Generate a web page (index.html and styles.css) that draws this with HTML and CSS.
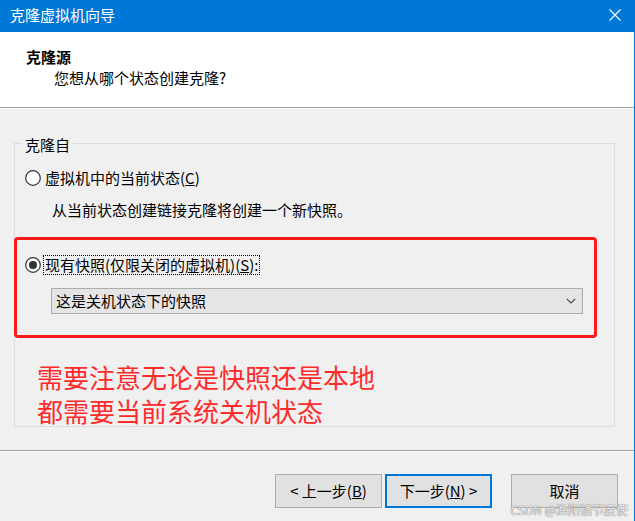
FILE: index.html
```html
<!DOCTYPE html>
<html lang="zh-CN">
<head>
<meta charset="utf-8">
<title>克隆虚拟机向导</title>
<link rel="stylesheet" href="styles.css">
</head>
<body>
<div class="window">
  <div class="titlebar">
    <span class="title">克隆虚拟机向导</span>
    <svg class="close" width="12" height="12" viewBox="0 0 12 12"><path d="M0.5 0.5 L11.5 11.5 M11.5 0.5 L0.5 11.5" stroke="#fff" stroke-width="1.1" fill="none"/></svg>
  </div>
  <div class="header">
    <div class="h-title">克隆源</div>
    <div class="h-sub">您想从哪个状态创建克隆?</div>
  </div>
  <div class="sep"></div>
  <div class="content">
    <fieldset class="group">
      <legend>克隆自</legend>
      <div class="opt opt1">
        <svg class="radio" width="16" height="16" viewBox="0 0 16 16"><circle cx="8" cy="8" r="7.3" fill="#fff" stroke="#333" stroke-width="1.2"/></svg>
        <span>虚拟机中的当前状态(<u>C</u>)</span>
      </div>
      <div class="desc">从当前状态创建链接克隆将创建一个新快照。</div>
      <div class="mark">
        <div class="opt opt2">
          <svg class="radio" width="16" height="16" viewBox="0 0 16 16"><circle cx="8" cy="8" r="7.3" fill="#fff" stroke="#333" stroke-width="1.2"/><circle cx="8" cy="8" r="4" fill="#333"/></svg>
          <span class="focus">现有快照(仅限关闭的虚拟机)(<u>S</u>):</span>
        </div>
        <div class="select">
          <span>这是关机状态下的快照</span>
          <svg width="10" height="6" viewBox="0 0 10 6"><polyline points="0.8,0.8 5,5 9.2,0.8" fill="none" stroke="#444" stroke-width="1.2"/></svg>
        </div>
      </div>
      <div class="note">需要注意无论是快照还是本地<br>都需要当前系统关机状态</div>
    </fieldset>
  </div>
  <div class="sep sep2"></div>
  <div class="footer">
    <button class="btn">&lt; 上一步(<u>B</u>)</button>
    <button class="btn btn-next">下一步(<u>N</u>) &gt;</button>
    <button class="btn btn-cancel">取消</button>
  </div>
  <div class="watermark">CSDN @渔阳镇节度使</div>
</div>
</body>
</html>
```

FILE: styles.css
```css
html, body {
  margin: 0;
  padding: 0;
}
body {
  background: #f0f0f0;
  font-family: "Noto Sans CJK SC", "Noto Sans", sans-serif;
  font-size: 15px;
  color: #000;
  width: 635px;
  height: 521px;
  overflow: hidden;
}
.window {
  position: relative;
  width: 635px;
  height: 521px;
  box-sizing: border-box;
  border-right: 1px solid #0078d7;
}
.titlebar {
  height: 32px;
  background: #0078d7;
  display: flex;
  align-items: center;
  padding: 0 13px 0 10px;
  box-sizing: border-box;
}
.title {
  color: #fff;
  font-size: 15px;
  line-height: 20px;
  margin-top: -2px;
}
.close {
  margin-left: auto;
  margin-top: -3px;
}
.header {
  height: 75px;
  background: #fff;
  padding: 15px 0 0 26px;
  box-sizing: border-box;
}
.h-title {
  font-weight: bold;
  line-height: 20px;
}
.h-sub {
  margin-top: 1px;
  padding-left: 28px;
  line-height: 20px;
}
.sep {
  height: 2px;
  box-sizing: border-box;
  border-top: 1px solid #a0a0a0;
  border-bottom: 1px solid #fff;
}
.content {
  padding-left: 14px;
}
.group {
  margin: 22px 0 0 0;
  padding: 0;
  width: 601px;
  height: 296px;
  box-sizing: border-box;
  border: 1px solid #dcdcdc;
  min-width: 0;
}
.group legend {
  margin-left: 7px;
  padding: 4px 3px 0;
  line-height: 20px;
}
.opt {
  display: flex;
  align-items: center;
}
.opt1 {
  margin-top: 12px;
  padding-left: 10px;
  line-height: 22px;
}
.opt1 .radio {
  margin-right: 4px;
}
.desc {
  margin-top: 11px;
  padding-left: 37px;
  line-height: 20px;
}
.mark {
  margin: 17px 0 0 -1px;
  width: 583px;
  box-sizing: border-box;
  border: 3px solid #ff1a1a;
  border-radius: 4px;
  padding: 15px 0 21px 8px;
}
.opt2 .radio {
  margin-right: 2px;
}
.focus {
  border: 1px dotted #000;
  padding: 0 1px;
  line-height: 18px;
}
.select {
  margin: 13px 0 0 26px;
  width: 532px;
  height: 26px;
  box-sizing: border-box;
  border: 1px solid #adadad;
  background: #e5e5e5;
  display: flex;
  align-items: center;
  justify-content: space-between;
  padding: 0 6px 0 4px;
  line-height: 20px;
}
.note {
  margin-top: 22px;
  padding-left: 22px;
  font-size: 26px;
  line-height: 34px;
  color: #ff2b2b;
  white-space: nowrap;
}
.sep2 {
  margin-top: 23px;
}
.footer {
  display: flex;
  justify-content: flex-end;
  padding-right: 16px;
  margin-top: 22px;
}
.btn {
  width: 107px;
  height: 34px;
  box-sizing: border-box;
  border: 1px solid #adadad;
  background: #e1e1e1;
  font-family: "Noto Sans CJK SC", "Noto Sans", sans-serif;
  font-size: 15px;
  color: #000;
  padding: 0;
  margin: 0;
  line-height: 20px;
}
.btn-next {
  border: 2px solid #0078d7;
  margin-left: 3px;
}
.btn-cancel {
  margin-left: 19px;
}
.watermark {
  position: absolute;
  right: 6px;
  bottom: 3px;
  font-size: 12px;
  line-height: 16px;
  color: #ececec;
  text-shadow: 0 0 1px #777, 0 0 1px #777;
  white-space: nowrap;
}
```
